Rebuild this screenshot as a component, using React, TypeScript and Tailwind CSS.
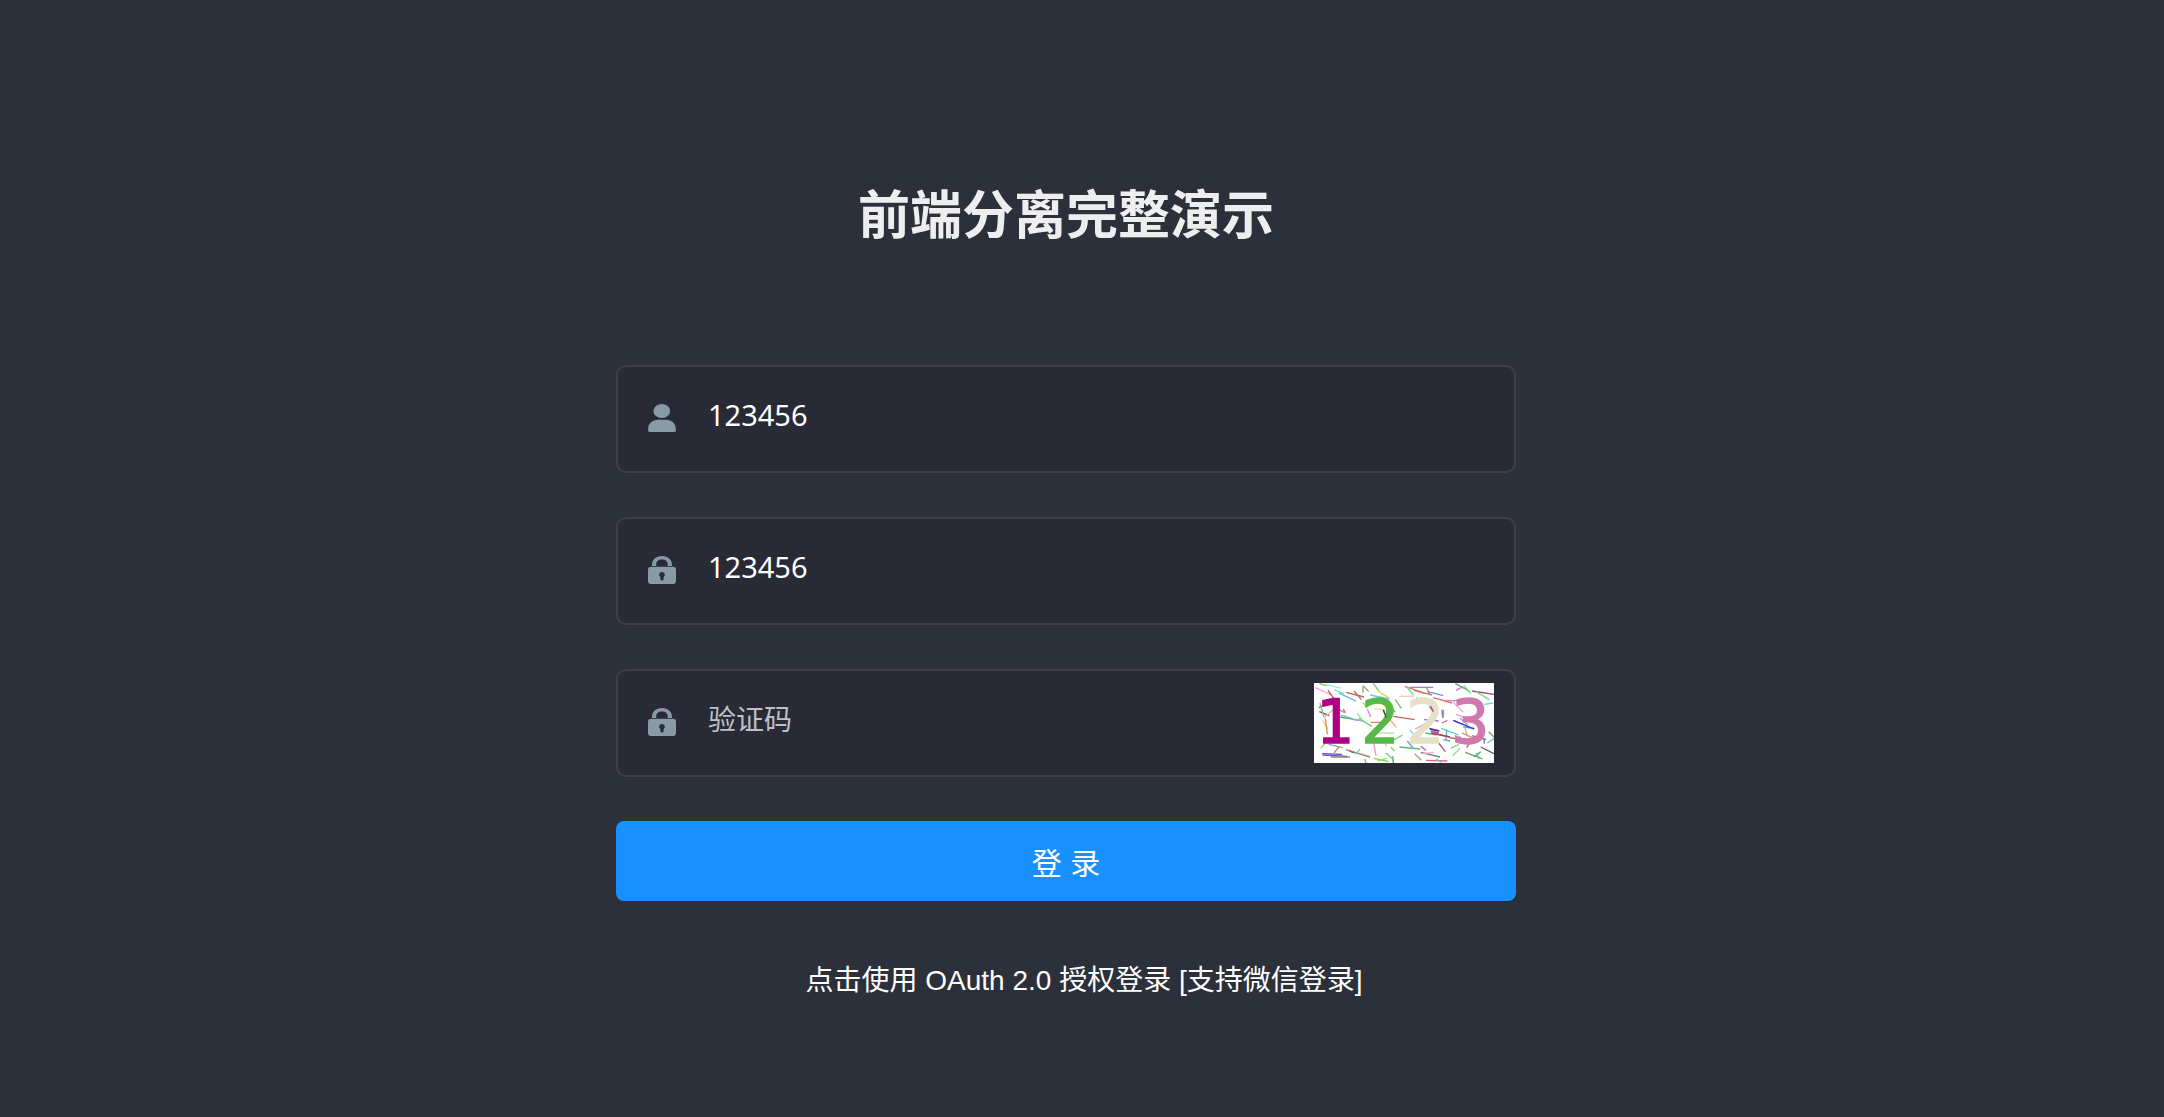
import { useState, type ReactNode } from 'react';

const noise: [number, number, number, number, string][] = [
  [4, 14, 52, 36, '#ff8de8'], [16, 2, 38, 8, '#6bbf4a'], [34, 4, 82, 16, '#8df5c0'], [42, 22, 62, 50, '#b03a3a'],
  [60, 20, 90, 32, '#5ee0d8'], [74, 30, 126, 54, '#2b9cf0'], [96, 28, 150, 42, '#a0522d'], [120, 24, 142, 50, '#c9405a'],
  [148, 8, 146, 28, '#8a8a4a'], [150, 10, 164, 26, '#a09050'], [178, 2, 196, 26, '#4fd04f'], [168, 36, 226, 48, '#40c8d8'],
  [194, 26, 224, 44, '#ffc040'], [244, 50, 262, 76, '#7a9a5a'], [256, 40, 300, 40, '#ecc9a4'], [272, 10, 330, 30, '#ee5a3a'],
  [288, 13, 358, 13, '#9a6ac8'], [280, 14, 298, 36, '#38d8a0'], [300, 22, 354, 36, '#b86848'], [338, 14, 348, 36, '#d85a98'],
  [340, 26, 388, 38, '#6a78e0'], [358, 44, 414, 60, '#f05040'], [424, 2, 466, 24, '#3a9a4a'], [450, 8, 470, 32, '#4fe04f'],
  [474, 24, 540, 34, '#902878'], [486, 26, 526, 50, '#55e060'], [426, 22, 448, 10, '#d05ce8'], [416, 56, 448, 88, '#ff9ad8'],
  [398, 52, 440, 54, '#c070d0'], [510, 64, 538, 60, '#40d8e0'], [484, 60, 496, 82, '#d07048'], [14, 74, 44, 60, '#586828'],
  [16, 86, 46, 98, '#444444'], [18, 60, 30, 102, '#70b060'], [30, 104, 62, 76, '#e8a8b0'], [26, 112, 42, 138, '#e8d040'],
  [34, 106, 40, 154, '#c88040'], [48, 52, 78, 92, '#98a8b8'], [60, 70, 90, 88, '#bb6870'], [78, 102, 138, 112, '#2d9a60'],
  [80, 96, 114, 106, '#67b6c8'], [118, 110, 150, 114, '#b088d8'], [130, 90, 144, 112, '#90e050'], [134, 106, 174, 130, '#45d35f'],
  [160, 78, 170, 102, '#d86ad8'], [146, 58, 160, 74, '#95dc45'], [170, 118, 218, 118, '#f06650'], [178, 78, 218, 80, '#f1ee45'],
  [208, 82, 218, 102, '#305030'], [218, 80, 220, 102, '#b82858'], [226, 108, 248, 134, '#f5a868'], [238, 100, 302, 110, '#b84938'],
  [222, 72, 244, 86, '#8078c8'], [190, 150, 240, 150, '#a8dc98'], [206, 168, 218, 190, '#f2b060'], [230, 176, 266, 156, '#65c868'],
  [256, 192, 318, 198, '#35b85a'], [280, 174, 296, 194, '#5088d0'], [288, 142, 304, 158, '#57ddd0'], [304, 138, 336, 120, '#c490dc'],
  [306, 44, 320, 52, '#40d878'], [346, 68, 358, 88, '#a03080'], [384, 80, 386, 104, '#8050a0'], [388, 80, 388, 104, '#9075b0'],
  [330, 110, 374, 114, '#9455d0'], [346, 136, 374, 144, '#50208e'], [350, 144, 374, 150, '#8c30b8'], [334, 150, 368, 156, '#38b860'],
  [352, 150, 408, 162, '#b83850'], [384, 120, 400, 112, '#d34b8a'], [382, 136, 434, 156, '#38cba0'], [398, 140, 396, 172, '#36a4b8'],
  [388, 170, 408, 174, '#459fb7'], [374, 180, 394, 206, '#953870'], [418, 112, 480, 138, '#3430d8'], [448, 132, 482, 136, '#5668f0'],
  [426, 94, 460, 106, '#e090e0'], [438, 106, 462, 126, '#66a2d8'], [444, 150, 480, 166, '#d46650'], [406, 164, 444, 170, '#a03d30'],
  [450, 124, 460, 160, '#88c658'], [474, 158, 516, 170, '#b83c58'], [510, 166, 511, 182, '#2878c0'], [524, 146, 540, 162, '#5b9e35'],
  [500, 192, 540, 212, '#303e48'], [520, 180, 540, 166, '#49cc9c'], [458, 194, 470, 174, '#b85038'], [410, 196, 434, 184, '#68d078'],
  [454, 208, 506, 228, '#4a8c48'], [480, 222, 500, 206, '#268858'], [486, 210, 496, 228, '#50b84e'], [416, 218, 438, 196, '#80da80'],
  [320, 208, 378, 222, '#4b7c42'], [322, 212, 360, 208, '#f098d0'], [336, 232, 400, 234, '#f03c90'], [366, 228, 382, 238, '#50cc58'],
  [302, 212, 322, 232, '#c08060'], [320, 190, 336, 202, '#c038b0'], [24, 212, 84, 214, '#3230c8'], [26, 216, 100, 220, '#5038c4'],
  [50, 222, 108, 222, '#87633c'], [44, 184, 86, 194, '#4fa2c8'], [20, 196, 34, 180, '#78d050'], [60, 210, 76, 190, '#e07040'],
  [96, 200, 168, 222, '#a4664b'], [106, 204, 120, 210, '#555555'], [124, 214, 138, 198, '#50d0a8'], [176, 164, 186, 218, '#e982ba'],
  [152, 228, 156, 240, '#39c84e'], [180, 226, 224, 236, '#45dd3a'], [190, 234, 218, 226, '#90e040'], [236, 220, 238, 240, '#209848'],
  [216, 210, 240, 232, '#5cca69'], [436, 160, 450, 180, '#4b83cc'], [230, 192, 242, 204, '#70d040'], [88, 78, 94, 90, '#a4583a'],
];

const digits: [string, number, string][] = [
  ['1', 7, '#ad0087'],
  ['2', 142, '#56b948'],
  ['2', 277, '#e7e0c8'],
  ['3', 412, '#cf79ae'],
];

function Captcha() {
  return (
    <svg viewBox="0 0 540 240" className="h-20 w-[180px] shrink-0 bg-white" role="img" aria-label="1223">
      <g strokeWidth="4" opacity="0.85">
        {noise.map(([x1, y1, x2, y2, color], i) => (
          <line key={i} x1={x1} y1={y1} x2={x2} y2={y2} stroke={color} />
        ))}
      </g>
      <g fontFamily="'DejaVu Sans', sans-serif" fontSize="180" strokeWidth="4">
        {digits.map(([char, x, color]) => (
          <text key={x} x={x} y="181" fill={color} stroke={color}>
            {char}
          </text>
        ))}
      </g>
      <g strokeWidth="4" opacity="0.85">
        <line x1="208" y1="80" x2="217" y2="104" stroke="#234e2c" />
        <line x1="350" y1="70" x2="358" y2="86" stroke="#a03070" />
        <line x1="418" y1="112" x2="480" y2="138" stroke="#3430d8" />
        <line x1="348" y1="138" x2="376" y2="144" stroke="#50208e" />
        <line x1="352" y1="150" x2="408" y2="162" stroke="#b83850" />
      </g>
    </svg>
  );
}

function UserIcon() {
  return (
    <svg viewBox="0 0 28 28" className="mb-0.5 size-7 shrink-0 fill-[#889aa4]" aria-hidden="true">
      <ellipse cx="13.8" cy="7" rx="8.4" ry="7" />
      <path d="M.2 27C-.6 20 4 15.8 10 15.8h8c6 0 10.600 4.200 9.800 11.200q-.2 1-1.200 1H1.400q-1 0-1.200-1z" />
    </svg>
  );
}

function LockIcon() {
  return (
    <svg viewBox="0 0 28 28" className="mb-0.5 size-7 shrink-0 fill-[#889aa4]" aria-hidden="true">
      <path d="M4 10V9C4 3.500 8 0 14 0s10 3.500 10 9v1h-4.200V8.500C19.800 5.300 17.500 3.500 14 3.500S8.200 5.300 8.200 8.500V10z" />
      <path
        fillRule="evenodd"
        d="M3 10.800h22a3 3 0 0 1 3 3V25a3 3 0 0 1-3 3H3a3 3 0 0 1-3-3V13.800a3 3 0 0 1 3-3zM14 16a2.900 2.900 0 0 0-1.600 5.300V23.500q0 .9 1.600.9t1.600-.9V21.300A2.900 2.900 0 0 0 14 16z"
      />
    </svg>
  );
}

type FieldProps = {
  label: string;
  icon: ReactNode;
  initial?: string;
  placeholder?: string;
  children?: ReactNode;
};

function Field({ label, icon, initial = '', placeholder, children }: FieldProps) {
  const [value, setValue] = useState(initial);
  return (
    <div className="flex h-[108px] items-center rounded-[10px] border-2 border-[#3e3f4a] bg-[#282a35] pr-5 pl-[30px]">
      {icon}
      <input
        type="text"
        aria-label={label}
        value={value}
        placeholder={placeholder}
        onChange={(e) => setValue(e.target.value)}
        className="ml-8 h-full min-w-0 flex-1 bg-transparent pb-2.5 font-['Noto_Sans','Noto_Sans_CJK_SC',sans-serif] text-[29px] text-white outline-none placeholder:text-[28px] placeholder:text-[#bfc0c8]"
      />
      {children}
    </div>
  );
}

export default function App() {
  return (
    <main className="flex min-h-screen flex-col items-center bg-[#2c303a] px-4 pt-45 pb-16 font-['Liberation_Sans','Noto_Sans_CJK_SC',sans-serif]">
      <form className="flex w-full max-w-[932px] flex-col gap-11 pr-8" onSubmit={(e) => e.preventDefault()}>
        <h1 className="mb-[69px] text-center text-[52px] leading-[72px] font-bold text-[#eeeeee]">
          前端分离完整演示
        </h1>
        <Field label="用户名" icon={<UserIcon />} initial="123456" />
        <Field label="密码" icon={<LockIcon />} initial="123456" />
        <Field label="验证码" icon={<LockIcon />} placeholder="验证码">
          <Captcha />
        </Field>
        <button type="submit" className="h-20 rounded-lg bg-[#1890ff] pt-1 text-[30px] text-white">
          登 录
        </button>
      </form>
      <a href="#oauth" className="mt-[60px] pl-1 text-[28px] leading-10 text-white">
        点击使用 OAuth 2.0 授权登录 [支持微信登录]
      </a>
    </main>
  );
}
